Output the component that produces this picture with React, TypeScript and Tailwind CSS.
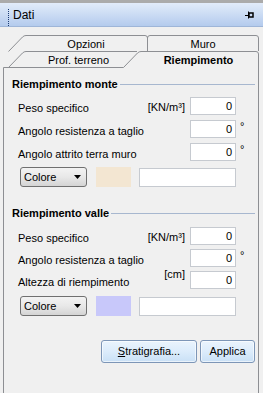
const LINE = '#8d8f93'

function TabStrip() {
  return (
    <div className="relative h-[41px]">
      <svg className="absolute left-0 top-0" width="263" height="41" viewBox="0 0 263 41" fill="none" stroke={LINE} strokeWidth="1">
        {/* back row */}
        <path d="M8.5,24.5 L22.5,10 Q24,8.5 26,8.5 L145,8.5 Q147.5,8.5 147.5,11 L147.5,24" />
        <path d="M147.5,11 Q147.5,8.5 150,8.5 L256,8.5 Q258.5,8.5 258.5,11 L258.5,24" />
        {/* front row */}
        <path d="M8.5,40.5 L22.5,26 Q24,24.5 26,24.5 L137,24.5" />
        <path d="M123.5,40.5 L137.5,26 Q139,24.5 141,24.5 L256,24.5 Q258.5,24.5 258.5,27 L258.5,41" />
        <path d="M3.5,41 L3.5,40.5 L123.5,40.5" />
      </svg>
      <div className="relative flex h-[16px] items-center pt-[9px] box-content">
        <div className="ml-[25px] w-[122px] text-center leading-none">Opzioni</div>
        <div className="w-[112px] text-center leading-none">Muro</div>
      </div>
      <div className="relative flex h-[16px] items-center">
        <div className="ml-[26px] w-[105px] text-center leading-none">Prof. terreno</div>
        <div className="ml-[7px] w-[121px] text-center font-bold leading-none">Riempimento</div>
      </div>
    </div>
  )
}

function GroupTitle({ title }: { title: string }) {
  return (
    <div className="flex h-[14px] items-center pl-[8px] pr-[3px]">
      <span className="font-bold leading-none">{title}</span>
      <div className="ml-[2px] h-px flex-1 bg-[#a7b7cf]" />
    </div>
  )
}

function Field({ label, unit, degree, unitUp }: { label: string; unit?: string; degree?: boolean; unitUp?: boolean }) {
  return (
    <div className="flex h-[18px] pl-[14px]">
      <span className="mt-[4px] flex-1 whitespace-nowrap leading-[14px]">{label}</span>
      {unit && (
        <span className={`mr-[5px] leading-[14px] ${unitUp ? '-mt-[4px]' : 'mt-[3px]'}`}>{unit}</span>
      )}
      <div className="flex h-[18px] w-[46px] items-center justify-end border border-[#c6cad0] bg-white pr-[3px] leading-none">0</div>
      <span className="w-[22px] pl-[4px] pt-[1px] text-[11px] leading-[10px]">{degree ? '°' : ''}</span>
    </div>
  )
}

function ColorRow({ swatch }: { swatch: string }) {
  return (
    <div className="flex h-[20px] items-center pl-[16px]">
      <div className="flex h-[20px] w-[67px] items-center justify-between rounded-[3px] border border-[#707070] bg-linear-to-b from-[#f3f3f3] via-[#e8e8e8] to-[#d4d4d4] pl-[3px] pr-[5px]">
        <span className="leading-none">Colore</span>
        <svg width="7" height="4" viewBox="0 0 7 4"><path d="M0,0 L7,0 L3.5,4 Z" fill="#000" /></svg>
      </div>
      <div className="ml-[9px] h-[20px] w-[35px]" style={{ backgroundColor: swatch }} />
      <div className="ml-[8px] h-[19px] w-[97px] border border-[#c6cad0] bg-white" />
    </div>
  )
}

function Button({ children }: { children: React.ReactNode }) {
  return (
    <div className="flex h-[23px] items-center justify-center rounded-[3px] border border-[#7d96b7] bg-linear-to-b from-[#eaf4fd] via-[#dcecfb] to-[#c9e0f6] shadow-[inset_0_0_0_1px_rgba(255,255,255,0.6)]">
      {children}
    </div>
  )
}

export default function App() {
  return (
    <div className="h-[393px] w-[263px] overflow-hidden bg-[#f0f0f0] font-['Liberation_Sans',Arial,sans-serif] text-[11px] text-black">
      <div className="h-[3px] bg-[#ababab]" />
      <div className="flex h-[24px] items-center border-b border-[#9fb6d8] bg-linear-to-b from-[#e2ecfa] to-[#b4cbed] pl-[8px] pr-[9px]">
        <div className="h-[17px] w-px self-end bg-[repeating-linear-gradient(to_bottom,#1d3d74_0px,#1d3d74_1px,transparent_1px,transparent_2px)]" />
        <span className="ml-[4px] text-[12px] leading-none">Dati</span>
        <div className="flex-1" />
        <svg width="9" height="8" viewBox="0 0 9 8">
          <path d="M0,4.5 L3,4.5" stroke="#000" strokeWidth="1" />
          <path d="M3.5,0.5 L3.5,7.5" stroke="#000" strokeWidth="1" />
          <rect x="4" y="2" width="4" height="4" fill="none" stroke="#000" strokeWidth="1.5" />
        </svg>
      </div>
      <TabStrip />
      <div className="ml-[3px] h-[325px] w-[256px] border-l border-r border-[#8d8f93]">
        <div className="pt-[9px]">
          <GroupTitle title="Riempimento monte" />
          <div className="mt-[6px] flex flex-col gap-[5px]">
            <Field label="Peso specifico" unit="[KN/m³]" />
            <Field label="Angolo resistenza a taglio" degree />
            <Field label="Angolo attrito terra muro" degree />
          </div>
          <div className="mt-[6px]">
            <ColorRow swatch="#f3e6d2" />
          </div>
        </div>
        <div className="pt-[19px]">
          <GroupTitle title="Riempimento valle" />
          <div className="mt-[7px] flex flex-col gap-[4px]">
            <Field label="Peso specifico" unit="[KN/m³]" />
            <Field label="Angolo resistenza a taglio" degree />
            <Field label="Altezza di riempimento" unit="[cm]" unitUp />
          </div>
          <div className="mt-[7px]">
            <ColorRow swatch="#c8c8fa" />
          </div>
        </div>
        <div className="mt-[24px] flex justify-end gap-[3px] pr-[3px]">
          <div className="w-[96px]">
            <Button><span><span className="underline">S</span>tratigrafia...</span></Button>
          </div>
          <div className="w-[55px]">
            <Button>Applica</Button>
          </div>
        </div>
      </div>
    </div>
  )
}
